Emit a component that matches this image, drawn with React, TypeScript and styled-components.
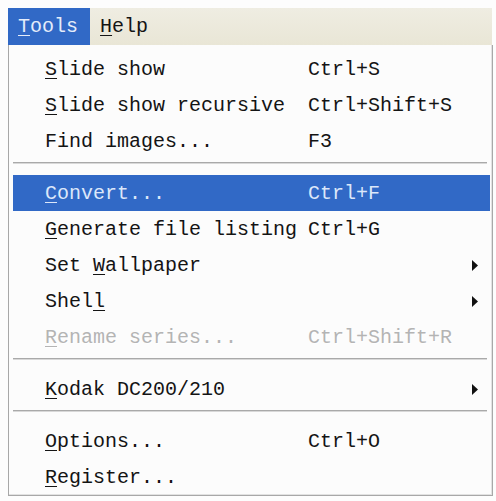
import * as React from "react";
import styled, { createGlobalStyle } from "styled-components";

const GlobalStyle = createGlobalStyle`
  body {
    margin: 0;
    background: #fdfdfd;
    font-family: "Liberation Mono", "DejaVu Sans Mono", monospace;
  }
`;

const Root = styled.div`
  width: 484px;
  padding: 8px 4px 4px 8px;
`;

const MenuBar = styled.div`
  display: flex;
  height: 37px;
  background: linear-gradient(#efede2, #e9e6d6);
  font-size: 20px;
  color: #141414;
`;

const MenuTitle = styled.div<{ $active?: boolean }>`
  display: flex;
  align-items: center;
  padding: 0 12px 0 10px;
  background: ${p => (p.$active ? "#3169c6" : "transparent")};
  color: ${p => (p.$active ? "#e4ecfa" : "#141414")};
`;

const Dropdown = styled.div`
  width: 477px;
  border: 1px solid #a8a8a8;
  border-top: none;
  background: #fcfcfc;
  padding: 6px 2px 0 4px;
  box-shadow: inset -1px -1px 0 #e2e2e2;
`;

const Item = styled.div<{ $selected?: boolean; $disabled?: boolean }>`
  display: grid;
  grid-template-columns: 263px 1fr 20px;
  align-items: center;
  height: 36px;
  padding: 0 12px 0 32px;
  font-size: 20px;
  white-space: pre;
  background: ${p => (p.$selected ? "#3169c6" : "transparent")};
  color: ${p =>
    p.$selected ? "#dce7fa" : p.$disabled ? "#b4b4b4" : "#141414"};
  text-shadow: ${p => (p.$disabled ? "1px 1px 0 #ffffff" : "none")};
`;

const Key = styled.u`
  text-decoration-thickness: 1px;
  text-underline-offset: 3px;
`;

const Separator = styled.div`
  height: 16px;
  padding-top: 3px;
  margin-right: 3px;
  box-sizing: border-box;
  &::before {
    content: "";
    display: block;
    height: 1px;
    background: #a9a9a9;
    border-bottom: 1px solid #d8d8d8;
  }
`;

const Arrow = styled.svg`
  justify-self: end;
  width: 7px;
  height: 11px;
`;

interface Entry {
  label: string;
  key?: number;
  shortcut?: string;
  submenu?: boolean;
  selected?: boolean;
  disabled?: boolean;
}

const groups: Entry[][] = [
  [
    { label: "Slide show", key: 0, shortcut: "Ctrl+S" },
    { label: "Slide show recursive", key: 0, shortcut: "Ctrl+Shift+S" },
    { label: "Find images...", shortcut: "F3" },
  ],
  [
    { label: "Convert...", key: 0, shortcut: "Ctrl+F", selected: true },
    { label: "Generate file listing", key: 0, shortcut: "Ctrl+G" },
    { label: "Set Wallpaper", key: 4, submenu: true },
    { label: "Shell", key: 4, submenu: true },
    { label: "Rename series...", key: 0, shortcut: "Ctrl+Shift+R", disabled: true },
  ],
  [{ label: "Kodak DC200/210", key: 0, submenu: true }],
  [
    { label: "Options...", key: 0, shortcut: "Ctrl+O" },
    { label: "Register...", key: 0 },
  ],
];

const Label: React.FC<{ text: string; k?: number }> = ({ text, k }) => {
  if (k === undefined) return <span>{text}</span>;
  return (
    <span>
      {text.slice(0, k)}
      <Key>{text[k]}</Key>
      {text.slice(k + 1)}
    </span>
  );
};

const App: React.FC = () => {
  return (
    <Root>
      <GlobalStyle />
      <MenuBar>
        <MenuTitle $active>
          <Label text="Tools" k={0} />
        </MenuTitle>
        <MenuTitle>
          <Label text="Help" k={0} />
        </MenuTitle>
      </MenuBar>
      <Dropdown>
        {groups.map((group, gi) => (
          <React.Fragment key={gi}>
            {gi > 0 && <Separator />}
            {group.map(entry => (
              <Item
                key={entry.label}
                $selected={entry.selected}
                $disabled={entry.disabled}
              >
                <Label text={entry.label} k={entry.key} />
                <span>{entry.shortcut ?? ""}</span>
                {entry.submenu ? (
                  <Arrow viewBox="0 0 7 11">
                    <path d="M1 0 L7 5.5 L1 11 Z" fill="#111" />
                  </Arrow>
                ) : (
                  <span />
                )}
              </Item>
            ))}
          </React.Fragment>
        ))}
      </Dropdown>
    </Root>
  );
};

export default App;
